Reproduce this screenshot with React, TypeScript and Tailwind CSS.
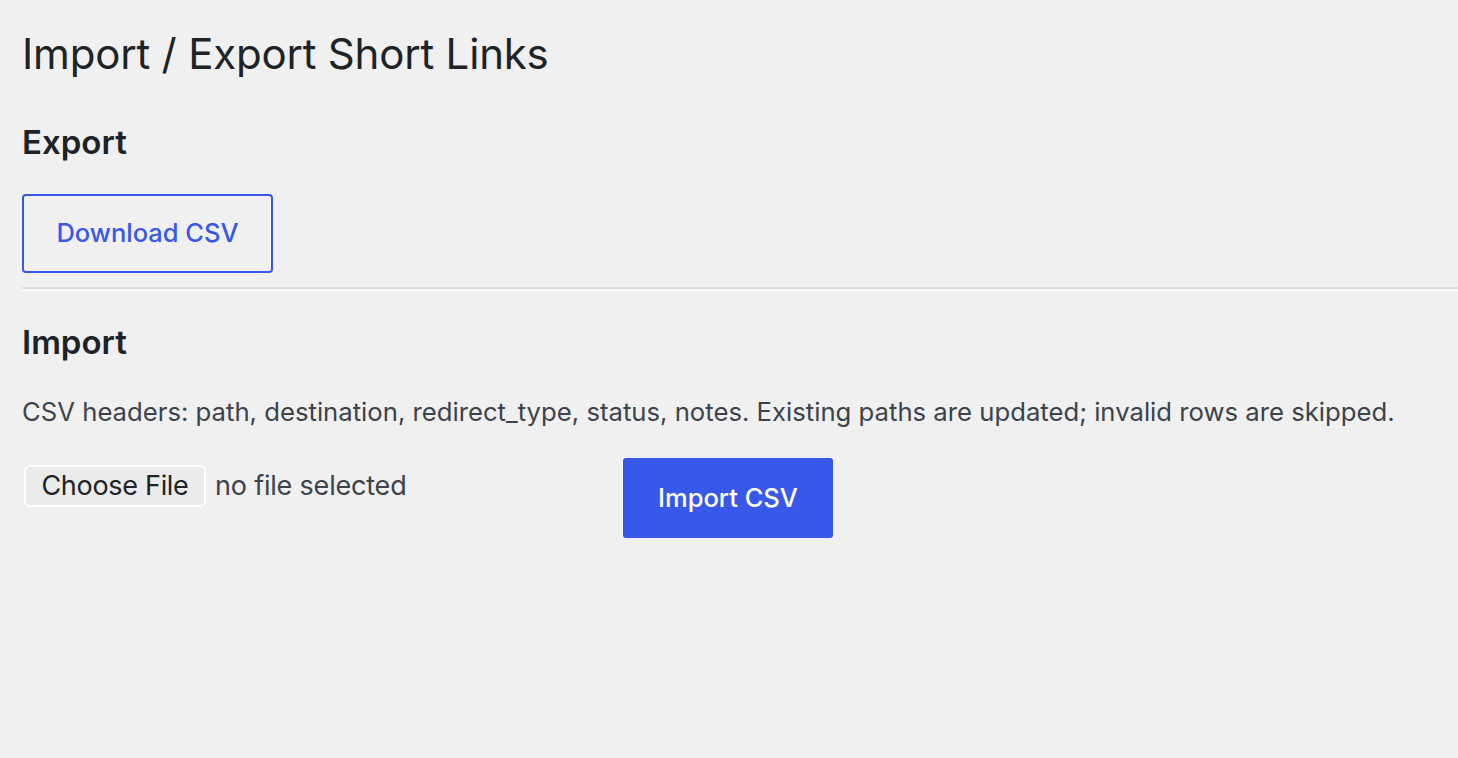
export default function App() {
  return (
    <div className="min-h-screen bg-[#f0f0f1] pl-[22px] pt-[28px] text-[#1d2327] font-['Inter',sans-serif]">
      <h1 className="text-[42px] font-normal leading-[52px] tracking-[-0.2px]">Import / Export Short Links</h1>

      <h2 className="mt-[44px] text-[33px] font-semibold leading-[36px]">Export</h2>
      <div className="mt-[34px]">
        <button className="h-[79px] w-[251px] rounded-[4px] border-[2px] border-[#3858e9] text-[25.5px] font-medium text-[#3858e9]">
          Download CSV
        </button>
      </div>

      <hr className="mt-[14px] border-t-[2px] border-b-[2px] border-t-[#dcdcde] border-b-[#f6f7f7]" />

      <h2 className="mt-[33px] text-[33px] font-semibold leading-[36px]">Import</h2>
      <p className="mt-[34px] text-[25.7px] leading-[36px] text-[#3c434a]">
        CSV headers: path, destination, redirect_type, status, notes. Existing paths are updated; invalid rows are skipped.
      </p>

      <form className="mt-[28px] flex items-start">
        <div className="flex w-[601px] items-center pt-[7px]">
          <span className="ml-[2px] flex h-[42px] w-[182px] items-center justify-center rounded-[6px] border-[2px] border-white bg-[#ebebeb] text-[27px] tracking-[-0.3px] text-[#1d2327]">
            Choose File
          </span>
          <span className="ml-[9px] text-[27px] tracking-[-0.2px] text-[#3c434a]">no file selected</span>
        </div>
        <button className="h-[80px] w-[210px] rounded-[3px] bg-[#3858e9] text-[25.5px] font-medium text-white">
          Import CSV
        </button>
      </form>
    </div>
  );
}
